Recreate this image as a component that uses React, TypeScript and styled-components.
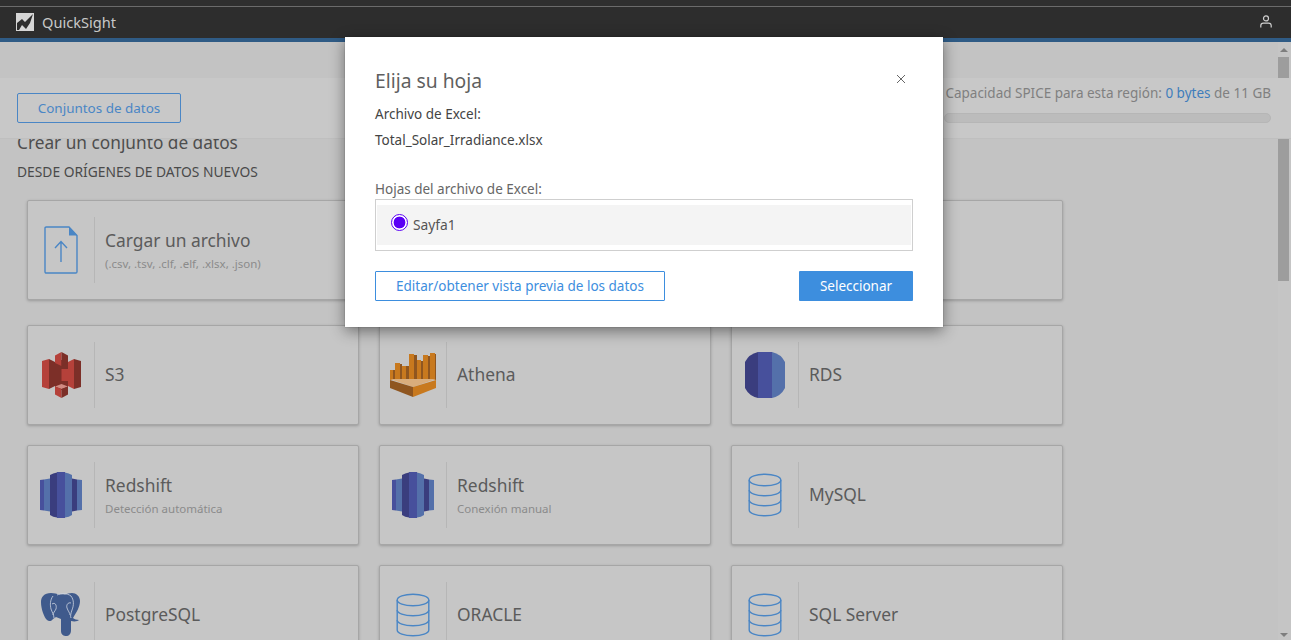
import React from "react";
import styled, { createGlobalStyle } from "styled-components";

const Global = createGlobalStyle`
  html, body { margin: 0; padding: 0; height: 100%; overflow: hidden; }
  body { font-family: "Noto Sans", "Open Sans", Arial, sans-serif; background: #c3c3c3; }
  * { box-sizing: border-box; }
`;

const Page = styled.div`
  position: relative;
  width: 1291px;
  height: 640px;
  display: flex;
  flex-direction: column;
  overflow: hidden;
`;
const TopBar = styled.header`
  height: 42px;
  flex: none;
  background: #2d2d2d;
  border-bottom: 4px solid #2f5b85;
  display: flex;
  align-items: center;
  justify-content: space-between;
  padding: 5px 19px 0 16px;
  position: relative;
  &::before {
    content: "";
    position: absolute;
    left: 0;
    right: 0;
    top: 0;
    height: 6px;
    background: #2f2f2f;
    border-bottom: 1px solid #6b6b6b;
  }
`;
const Brand = styled.div`
  display: flex;
  align-items: center;
  gap: 8px;
  color: #c8c8c8;
  font-size: 14.6px;
`;
const Body = styled.div`
  flex: 1;
  display: flex;
  min-height: 0;
  position: relative;
`;
const Content = styled.main`
  flex: 1;
  padding: 91px 0 0 17px;
  min-width: 0;
`;
const Heading = styled.h1`
  margin: 0;
  font-size: 17.25px;
  line-height: 20px;
  font-weight: 400;
  color: #4e4e4e;
`;
const SubHeading = styled.h2`
  margin: 10px 0 19px;
  font-size: 13.8px;
  line-height: 18px;
  font-weight: 400;
  color: #4a4a4a;
`;
const Grid = styled.div`
  display: grid;
  grid-template-columns: repeat(3, 332px);
  column-gap: 20px;
  margin-left: 10px;
`;
const Card = styled.div<{ $gap: number }>`
  height: 100px;
  margin-bottom: ${(p) => p.$gap}px;
  background: #c6c6c6;
  border: 1px solid #a6a6a6;
  border-radius: 2px;
  box-shadow: 0 1px 3px rgba(0, 0, 0, 0.22);
  display: flex;
  align-items: center;
  padding: 16px 0;
`;
const IconCell = styled.div`
  width: 67px;
  height: 66px;
  flex: none;
  border-right: 1px solid #b6b6b6;
  display: flex;
  align-items: center;
  justify-content: center;
`;
const CardText = styled.div<{ $hasSub: boolean }>`
  padding: 0 0 ${(p) => (p.$hasSub ? 0 : 2)}px 10px;
  display: flex;
  flex-direction: column;
  gap: 4px;
`;
const CardTitle = styled.div`
  font-size: 17.4px;
  line-height: 24px;
  color: #5b5b5b;
`;
const CardSub = styled.div`
  font-size: 11.5px;
  line-height: 16px;
  color: #8b8b8b;
`;
const StickyBand = styled.div`
  position: absolute;
  left: 0;
  right: 0;
  top: 36px;
  height: 61px;
  background: #c8c8c8;
  border-bottom: 1px solid #bfbfbf;
  display: flex;
  justify-content: space-between;
  padding: 6px 20px 0 17px;
  z-index: 2;
`;
const OutlineSmall = styled.button`
  width: 164px;
  height: 30px;
  margin-top: 9px;
  padding: 0;
  border: 1px solid #4a86c5;
  border-radius: 2px;
  background: transparent;
  color: #4a86c5;
  font: 13.45px "Noto Sans", sans-serif;
`;
const Spice = styled.div`
  width: 327px;
  display: flex;
  flex-direction: column;
  gap: 11px;
`;
const SpiceText = styled.div`
  font-size: 13.5px;
  line-height: 18px;
  color: #808080;
  white-space: nowrap;
  text-align: right;
  b { font-weight: 400; color: #3f7dbb; }
`;
const SpiceBar = styled.div`
  height: 10px;
  border-radius: 5px;
  background: #bcbcbc;
  border: 1px solid #b6b6b6;
`;
const Scrollbar = styled.div`
  width: 13px;
  flex: none;
  background: #c5c5c5;
  position: relative;
  display: flex;
  flex-direction: column;
  align-items: center;
  padding: 0 2px 0 0;
`;
const ArrowUp = styled.div`
  margin: 6px 0 5px;
  width: 0;
  height: 0;
  border-left: 4px solid transparent;
  border-right: 4px solid transparent;
  border-bottom: 4px solid #7e7e7e;
`;
const ArrowDown = styled(ArrowUp)`
  margin: auto 0 3px;
  border-bottom: 0;
  border-top: 4px solid #7e7e7e;
`;
const Thumb = styled.div`
  width: 11px;
  height: 224px;
  background: #9d9d9d;
`;
const Dialog = styled.section`
  position: absolute;
  left: 345px;
  top: 37px;
  width: 598px;
  height: 290px;
  background: #fff;
  box-shadow: 0 0 1px rgba(0,0,0,.4), 0 4px 14px rgba(0, 0, 0, 0.45);
  padding: 30px 30px 0;
  z-index: 5;
  display: flex;
  flex-direction: column;
`;
const DialogHead = styled.div`
  display: flex;
  align-items: flex-start;
  justify-content: space-between;
  height: 38px;
  padding-right: 7px;
`;
const DialogTitle = styled.h3`
  margin: 0;
  font-size: 19.3px;
  line-height: 28px;
  font-weight: 400;
  color: #5f5f5f;
`;
const Close = styled.button`
  border: 0;
  background: none;
  padding: 0;
  margin: 7px 0 0;
  width: 10px;
  height: 12px;
  display: flex;
`;
const DialogLine = styled.div<{ $mb: number; $muted?: boolean }>`
  font-size: 13.5px;
  line-height: 18px;
  color: ${(p) => (p.$muted ? "#666" : "#444")};
  margin-bottom: ${(p) => p.$mb}px;
`;
const SheetList = styled.div`
  height: 52px;
  border: 1px solid #cfcfcf;
  padding: 5px 1px;
`;
const SheetRow = styled.label`
  height: 40px;
  background: #f4f4f4;
  display: flex;
  align-items: flex-start;
  padding: 9px 0 0 14px;
  gap: 5px;
  font-size: 13.8px;
  color: #555;
  span { padding-top: 2px; line-height: 18px; }
`;
const Radio = styled.i`
  width: 17px;
  height: 17px;
  border-radius: 50%;
  border: 1.5px solid #5a00f5;
  background: radial-gradient(circle, #5a00f5 0 5.6px, #fff 6.2px);
`;
const Actions = styled.div`
  display: flex;
  justify-content: space-between;
  margin-top: 20px;
`;
const Outline = styled.button`
  width: 290px;
  height: 30px;
  padding: 0;
  border: 1px solid #3d8ede;
  border-radius: 1px;
  background: #fff;
  color: #3d8ede;
  font: 13.5px "Noto Sans", sans-serif;
`;
const Primary = styled.button`
  width: 114px;
  height: 30px;
  padding: 0;
  border: 0;
  border-radius: 1px;
  background: #3d8ede;
  color: #fff;
  font: 13.5px "Noto Sans", sans-serif;
`;

const blue = "#4a86c5";
const Logo = () => (
  <svg width="18" height="18" viewBox="0 0 18 18">
    <rect width="18" height="18" fill="#d6d6d6" />
    <path d="M1 17V10L6 6l3 3 8-8-3 9-4 6-4-4-3 5z" fill="#2d2d2d" />
  </svg>
);
const User = () => (
  <svg width="12" height="13" viewBox="0 0 12 13" fill="none" stroke="#cfcfcf" strokeWidth="1.2">
    <circle cx="6" cy="3.4" r="2.5" />
    <path d="M.8 12.4V10.6C.8 9 2 8.2 3.4 8.2h5.2c1.4 0 2.6.8 2.6 2.4v1.8" />
  </svg>
);
const Upload = () => (
  <svg width="34" height="48" viewBox="0 0 34 48" fill="none">
    <path d="M1 2.2C1 1.5 1.5 1 2.2 1H25L33 9.5V45.8c0 .7-.5 1.2-1.2 1.2H2.2C1.5 47 1 46.5 1 45.8z" stroke={blue} strokeWidth="1.4" />
    <path d="M25 1l8 8.5h-8z" fill={blue} />
    <path d="M17 36V16M11 22l6-6.5 6 6.5" stroke={blue} strokeWidth="1.4" />
  </svg>
);
const S3 = () => (
  <svg width="39" height="46" viewBox="0 0 39 46">
    <path d="M13 8h13v30H13z" fill="#7c2f28" />
    <path d="M0 9l7-2v30l-7-2z" fill="#b5413a" />
    <path d="M7 7l6 3v24l-6 3z" fill="#7c2f28" />
    <path d="M39 9l-7-2v30l7-2z" fill="#7c2f28" />
    <path d="M32 7l-6 3v24l6 3z" fill="#b5413a" />
    <path d="M19.500 0L13 3.500V11l6.500 3z" fill="#b5413a" />
    <path d="M19.500 0L26 3.500V11l-6.500 3z" fill="#7c2f28" />
    <path d="M13 17h6.500v12H13z" fill="#7c2f28" />
    <path d="M19.500 17H26v12h-6.500z" fill="#b5413a" />
    <path d="M13 34.500l6.500-2.500 6.500 2.500-6.500 2.500z" fill="#d08a82" />
    <path d="M13 34.500l6.500 2.500v9L13 42.500z" fill="#b5413a" />
    <path d="M26 34.500L19.500 37v9l6.500-3.500z" fill="#7c2f28" />
  </svg>
);
const Athena = () => (
  <svg width="46" height="46" viewBox="0 0 46 46">
    <g fill="#c8791e">
      <path d="M0 18h3v10H0zM5 11h5v17H5zM12 14h4v14h-4zM19 2h5v26h-5zM27 8h4v20h-4zM33 3h5v25h-5zM40 1h5v27h-5z" />
    </g>
    <g fill="#8f5620">
      <path d="M3 18h2v10H3zM10 12h2v16h-2zM16 14h3v14h-3zM24 3h3v25h-3zM31 9h2v19h-2zM38 4h2v24h-2zM45 2h1v26h-1z" />
    </g>
    <path d="M0 27h46l-23 8z" fill="#d9ad7c" />
    <path d="M0 28l23 7v10L0 36z" fill="#8f5620" />
    <path d="M46 28l-23 7v10l23-9z" fill="#c8791e" />
  </svg>
);
const Rds = () => (
  <svg width="42" height="46" viewBox="0 0 42 46">
    <path d="M14 0Q5 2 1 10V36Q5 44 14 46z" fill="#3a3d7e" />
    <path d="M14 0h14v46H14z" fill="#47509c" />
    <path d="M28 0Q37 2 41 10V36Q37 44 28 46z" fill="#5470aa" />
  </svg>
);
const Redshift = () => (
  <svg width="42" height="46" viewBox="0 0 42 46">
    <path d="M0 8l4-.500v31L0 38z" fill="#47509c" />
    <path d="M4 7.500L10 6.500v33l-6-1z" fill="#5470aa" />
    <path d="M32 6.500l5 1v31l-5 1z" fill="#3a3d7e" />
    <path d="M37 7.500l5 .500v30l-5 .500z" fill="#5470aa" />
    <path d="M17 0.500Q13 1 10 3V43Q13 45 17 45.500z" fill="#3a3d7e" />
    <path d="M17 0h8v46h-8z" fill="#47509c" />
    <path d="M25 0.500Q29 1 32 3V43Q29 45 25 45.500z" fill="#5470aa" />
  </svg>
);
const Db = () => (
  <svg width="34" height="44" viewBox="0 0 34 44" fill="none" stroke={blue} strokeWidth="1.4">
    <ellipse cx="17" cy="7" rx="15.800" ry="5.800" />
    <path d="M1.200 7v30c0 3.200 7 5.800 15.800 5.800S32.800 40.200 32.800 37V7" />
    <path d="M1.200 17c0 3.200 7 5.800 15.800 5.800S32.800 20.200 32.800 17M1.200 27c0 3.200 7 5.800 15.800 5.800S32.800 30.200 32.800 27" />
  </svg>
);
const Pg = () => (
  <svg width="40" height="44" viewBox="0 0 40 44">
    <path d="M10 0C3 0 0 4 0 9C0 16 3 24 6 27C8 29 11 28 12 26L15 24L20 26V38C20 42 23 43 25 43C28 43 30 41 30 37V28C34 29 37 28 38 27C36 27 33 26 32 25C35 20 39 14 39 8C39 3 35 0 31 0C28 0 26 1 24 1.500C22 1 20 1 18 1.500C16 1 13 0 10 0z" fill="#3f5a8c" />
    <path d="M12 3C9 7 9 12 10 16C11 19 13 22 13 25M11 11C14 9 16 12 15 16C14 18 12 20 12 22M16 2C20 0 26 0 30 3C33 7 33 12 31 17C30 20 29 23 30 25M30 10C27 9 25 12 26 15C27 18 29 20 29 22" fill="none" stroke="#cfd6e2" strokeWidth="0.8" />
  </svg>
);

type Item = { icon: React.ReactNode; title: string; sub?: string; gap: number };
const items: Item[] = [
  { icon: <Upload />, title: "Cargar un archivo", sub: "(.csv, .tsv, .clf, .elf, .xlsx, .json)", gap: 25 },
  { icon: null, title: "", gap: 25 },
  { icon: null, title: "", gap: 25 },
  { icon: <S3 />, title: "S3", gap: 20 },
  { icon: <Athena />, title: "Athena", gap: 20 },
  { icon: <Rds />, title: "RDS", gap: 20 },
  { icon: <Redshift />, title: "Redshift", sub: "Detección automática", gap: 20 },
  { icon: <Redshift />, title: "Redshift", sub: "Conexión manual", gap: 20 },
  { icon: <Db />, title: "MySQL", gap: 20 },
  { icon: <Pg />, title: "PostgreSQL", gap: 20 },
  { icon: <Db />, title: "ORACLE", gap: 20 },
  { icon: <Db />, title: "SQL Server", gap: 20 },
];

export default function App() {
  return (
    <Page>
      <Global />
      <TopBar>
        <Brand><Logo />QuickSight</Brand>
        <User />
      </TopBar>
      <Body>
        <Content>
          <Heading>Crear un conjunto de datos</Heading>
          <SubHeading>DESDE ORÍGENES DE DATOS NUEVOS</SubHeading>
          <Grid>
            {items.map((it, i) => (
              <Card key={i} $gap={it.gap}>
                <IconCell>{it.icon}</IconCell>
                <CardText $hasSub={Boolean(it.sub)}>
                  <CardTitle>{it.title}</CardTitle>
                  {it.sub && <CardSub>{it.sub}</CardSub>}
                </CardText>
              </Card>
            ))}
          </Grid>
        </Content>
        <Scrollbar>
          <ArrowUp />
          <Thumb />
          <ArrowDown />
        </Scrollbar>
        <StickyBand>
          <OutlineSmall>Conjuntos de datos</OutlineSmall>
          <Spice>
            <SpiceText>Capacidad SPICE para esta región: <b>0 bytes</b> de 11 GB</SpiceText>
            <SpiceBar />
          </Spice>
        </StickyBand>
      </Body>
      <Dialog>
        <DialogHead>
          <DialogTitle>Elija su hoja</DialogTitle>
          <Close aria-label="Cerrar">
            <svg width="10" height="10" viewBox="0 0 10 10" stroke="#666" strokeWidth="1" fill="none">
              <path d="M1 1l8 8M9 1l-8 8" />
            </svg>
          </Close>
        </DialogHead>
        <DialogLine $mb={8}>Archivo de Excel:</DialogLine>
        <DialogLine $mb={31}>Total_Solar_Irradiance.xlsx</DialogLine>
        <DialogLine $mb={1} $muted>Hojas del archivo de Excel:</DialogLine>
        <SheetList>
          <SheetRow><Radio /><span>Sayfa1</span></SheetRow>
        </SheetList>
        <Actions>
          <Outline>Editar/obtener vista previa de los datos</Outline>
          <Primary>Seleccionar</Primary>
        </Actions>
      </Dialog>
    </Page>
  );
}
